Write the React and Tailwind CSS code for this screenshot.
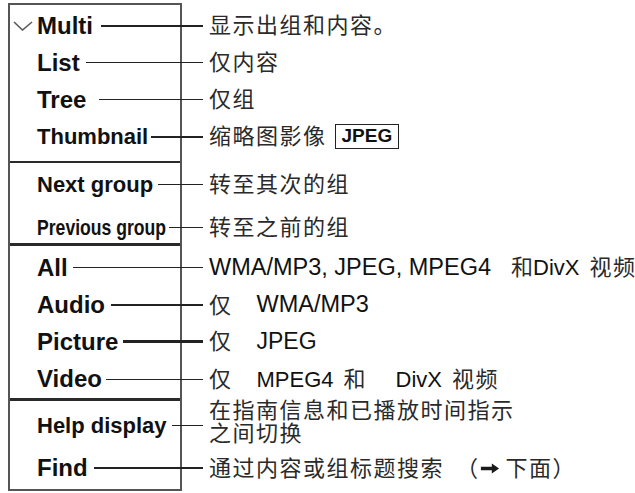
import React from "react";

const Zh = ({ children, className = "" }) => (
  <span className={`tracking-[1.5px] text-[22px] text-[#2a2a2a] ${className}`}>{children}</span>
);

const Arrow = () => (
  <svg viewBox="0 0 22 14" className="w-[20px] h-[13px] inline-block">
    <path d="M1 5.2h12V1.5L21 7l-8 5.5V8.8H1z" fill="#1a1a1a" />
  </svg>
);

const Check = () => (
  <svg viewBox="0 0 20 10" className="w-[20px] h-[10px] mr-[4px]">
    <path d="M1 1l8.5 8L19 1" fill="none" stroke="#5a5a5a" strokeWidth="1.6" />
  </svg>
);

const sections = [
  {
    pad: "pt-[2px] pb-[6px]",
    rows: [
      {
        h: "h-[37px]",
        label: "Multi",
        size: "text-[24px]",
        gap: "ml-[8px]",
        line: "h-[2px]",
        check: true,
        text: <Zh>显示出组和内容。</Zh>,
      },
      { h: "h-[37px]", label: "List", size: "text-[24px]", gap: "ml-[6px]", line: "h-[1.5px]", text: <Zh>仅内容</Zh> },
      { h: "h-[37px]", label: "Tree", size: "text-[24px]", gap: "ml-[13px]", line: "h-[1.5px]", text: <Zh>仅组</Zh> },
      {
        h: "h-[37px]",
        label: "Thumbnail",
        size: "text-[22px]",
        gap: "ml-[3px]",
        line: "h-[2px]",
        text: (
          <>
            <Zh>缩略图影像</Zh>
            <span className="ml-[8px] border-[1.5px] border-[#222] px-[6px] h-[25px] flex items-center text-[19px] font-bold text-[#111]">
              JPEG
            </span>
          </>
        ),
      },
    ],
  },
  {
    pad: "",
    sep: "h-[2px]",
    rows: [
      { h: "h-[42px]", label: "Next group", size: "text-[22px]", gap: "ml-[5px]", line: "h-px", text: <Zh>转至其次的组</Zh> },
      {
        h: "h-[38px] pt-[6px]",
        label: "Previous group",
        size: "text-[22px]",
        narrow: true,
        gap: "ml-[4px]",
        line: "h-px",
        text: <Zh>转至之前的组</Zh>,
      },
    ],
  },
  {
    pad: "",
    sep: "h-[3px]",
    rows: [
      {
        h: "h-[41px] pt-[2px]",
        label: "All",
        size: "text-[24px]",
        gap: "ml-[5px]",
        line: "h-[1.5px]",
        text: (
          <>
            <span className="text-[23.5px]">WMA/MP3, JPEG, MPEG4</span>
            <Zh className="ml-[20px] text-[20px] tracking-normal">和</Zh>
            <span>DivX</span>
            <Zh className="ml-[10px] text-[21px]">视频</Zh>
          </>
        ),
      },
      {
        h: "h-[36px]",
        label: "Audio",
        size: "text-[24px]",
        gap: "ml-[6px]",
        line: "h-[1.5px]",
        text: (
          <>
            <Zh>仅</Zh>
            <span className="ml-[24px] text-[23.5px]">WMA/MP3</span>
          </>
        ),
      },
      {
        h: "h-[37px]",
        label: "Picture",
        size: "text-[24px]",
        gap: "ml-[5px]",
        line: "h-[2.5px]",
        text: (
          <>
            <Zh>仅</Zh>
            <span className="ml-[24px] text-[23px]">JPEG</span>
          </>
        ),
      },
      {
        h: "h-[38px]",
        label: "Video",
        size: "text-[24px]",
        gap: "ml-[4px]",
        line: "h-px",
        text: (
          <>
            <Zh>仅</Zh>
            <span className="ml-[24px]">MPEG4</span>
            <Zh className="ml-[10px] text-[20px] tracking-normal">和</Zh>
            <span className="ml-[30px]">DivX</span>
            <Zh className="ml-[10px] text-[21px]">视频</Zh>
          </>
        ),
      },
    ],
  },
  {
    pad: "pb-[2px]",
    sep: "h-[3px]",
    rows: [
      {
        h: "h-[48px]",
        label: "Help display",
        size: "text-[22px]",
        gap: "ml-[5px]",
        line: "h-px",
        text: (
          <div className="flex flex-col mb-[7px]">
            <Zh className="block leading-[23px]">在指南信息和已播放时间指示</Zh>
            <Zh className="block leading-[23px]">之间切换</Zh>
          </div>
        ),
      },
      {
        h: "h-[38px]",
        label: "Find",
        size: "text-[24px]",
        gap: "ml-[6px]",
        line: "h-[2px]",
        text: (
          <>
            <Zh>通过内容或组标题搜索</Zh>
            <Zh className="ml-[12px]">（</Zh>
            <Arrow />
            <Zh className="ml-[6px]">下面）</Zh>
          </>
        ),
      },
    ],
  },
];

export default function App() {
  return (
    <div className="w-[635px] h-[493px] bg-white pl-[8px] pt-[3px] font-['Liberation_Sans','Noto_Sans_CJK_SC',sans-serif] text-[#111]">
      <div className="w-[174px] border-2 border-[#555]">
        {sections.map((section, si) => (
          <React.Fragment key={si}>
            {section.sep && <div className={`${section.sep} w-[170px] bg-[#2a2a2a]`} />}
            <div className={`flex flex-col ${section.pad}`}>
              {section.rows.map((row) => (
                <div key={row.label} className={`flex items-center w-[625px] ${row.h}`}>
                  <div className={`w-[193px] shrink-0 flex items-center ${row.check ? "pl-[3px]" : "pl-[27px]"}`}>
                    {row.check && <Check />}
                    {row.narrow ? (
                      <div className="w-[128px] whitespace-nowrap">
                        <span className={`inline-block origin-left scale-x-[0.8] font-bold ${row.size}`}>{row.label}</span>
                      </div>
                    ) : (
                      <span className={`font-bold whitespace-nowrap ${row.size}`}>{row.label}</span>
                    )}
                    <div className={`flex-1 bg-[#222] ${row.gap} ${row.line}`} />
                  </div>
                  <div className="ml-[6px] flex items-center whitespace-nowrap text-[22px]">{row.text}</div>
                </div>
              ))}
            </div>
          </React.Fragment>
        ))}
      </div>
    </div>
  );
}
